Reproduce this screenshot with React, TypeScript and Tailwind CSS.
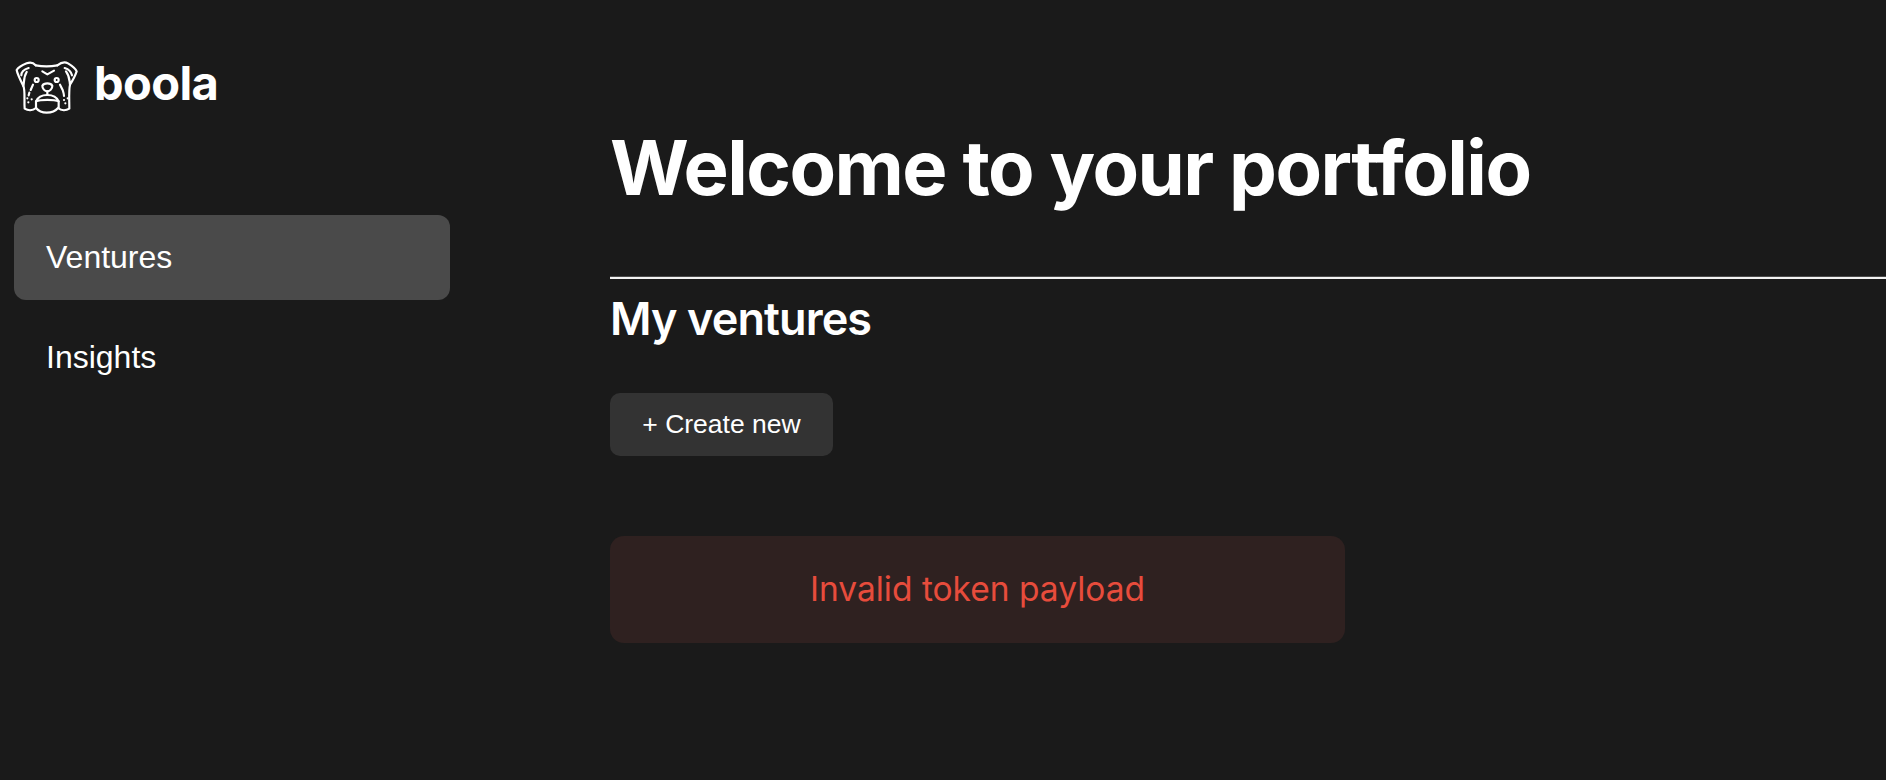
function Dog() {
  return (
    <svg width="65" height="55" viewBox="40 60 195 165" fill="none" stroke="white" strokeWidth="6.5" strokeLinecap="round" strokeLinejoin="round" className="shrink-0">
      <path d="M105 76 C98 68 88 66 78 70 C66 75 54 80 48 90 C50 102 56 114 68 138 C71 128 68 112 78 96" />
      <path d="M62 106 C62 96 70 88 84 84" />
      <path d="M105 76 C125 80 150 80 170 76" />
      <path d="M170 76 C180 68 192 64 202 70 C212 76 224 84 228 94 C224 106 218 118 208 134 C206 122 208 110 196 94" />
      <path d="M214 106 C212 96 204 88 192 84" />
      <path d="M68 138 C74 150 70 180 72 206 C82 212 96 212 106 204 C114 214 126 218 138 218 C150 218 164 214 172 204 C182 212 196 212 206 206 C206 180 204 150 208 134" />
      <path d="M125 94 L140 103 L160 92" />
      <circle cx="108" cy="120" r="6" />
      <circle cx="168" cy="120" r="6" />
      <path d="M125 137 C130 128 150 128 155 137 C155 146 148 154 140 154 C132 154 125 146 125 137 Z" />
      <path d="M140 154 V165" />
      <path d="M106 184 C112 170 128 165 140 165 C152 165 168 170 174 184 C160 178 120 178 106 184 Z" />
      <path d="M106 184 V204 M174 184 V204" />
      <path d="M97 134 L90 150 M86 158 L84 166" />
      <path d="M178 134 L186 150 C188 156 190 162 190 168" />
      <path d="M80 175 h.1 M93 178 h.1 M83 187 h.1 M190 180 h.1 M201 175 h.1 M194 190 h.1" />
    </svg>
  );
}

export default function App() {
  return (
    <div className="flex min-h-[780px] w-full overflow-hidden bg-[#1a1a1a] text-white font-['Inter','Liberation_Sans',sans-serif]">
      <aside className="w-[610px] shrink-0 pl-[14px] pt-[60px]">
        <div className="flex items-start gap-[15px] h-[55px]">
          <Dog />
          <span className="mt-[-5px] text-[47px] leading-[56px] font-bold tracking-[-0.6px]">boola</span>
        </div>
        <nav className="mt-[100px] w-[436px] text-[32px] font-['Liberation_Sans',sans-serif]">
          <div className="flex h-[85px] items-center rounded-[12px] bg-[#4a4a4a] pb-[2px] pl-[32px]">Ventures</div>
          <div className="flex h-[85px] mt-[16px] items-center pb-[4px] pl-[32px]">Insights</div>
        </nav>
      </aside>
      <main className="flex-1 min-w-0 pt-[121px]">
        <h1 className="text-[76px] leading-[92px] font-bold tracking-[-1.55px] [font-feature-settings:'liga'_0,'calt'_0]">Welcome to your portfolio</h1>
        <div className="mt-[63px] h-[3px] bg-[#f2f2f2] border-t border-[#4a4a4a]" />
        <h2 className="mt-[14px] text-[45px] leading-[52px] font-semibold tracking-[-0.9px]">My ventures</h2>
        <button className="mt-[48px] flex h-[63px] w-[223px] items-center justify-center rounded-[10px] bg-[#333333] text-[26.5px] font-['Liberation_Sans',sans-serif]">+ Create new</button>
        <div className="mt-[80px] flex h-[107px] w-[735px] items-center justify-center rounded-[14px] bg-[#2f2120] text-[33.5px] text-[#e74c3c]">Invalid token payload</div>
      </main>
    </div>
  );
}
